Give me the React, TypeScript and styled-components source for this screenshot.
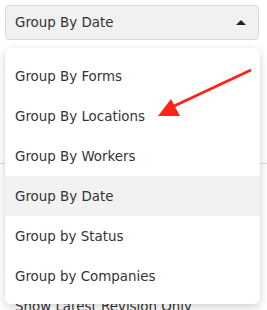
import React from 'react';
import styled, { createGlobalStyle } from 'styled-components';

const GlobalStyle = createGlobalStyle`
  body {
    margin: 0;
    background: #ffffff;
    font-family: 'DejaVu Sans', 'Liberation Sans', sans-serif;
    color: #333333;
  }
`;

const Page = styled.div`
  position: relative;
  width: 267px;
  height: 310px;
  overflow: hidden;
  padding: 5px 8px 0 5px;
  box-sizing: border-box;
`;

const SelectBox = styled.div`
  height: 35px;
  box-sizing: border-box;
  display: flex;
  align-items: center;
  justify-content: space-between;
  padding: 0 12px 0 9px;
  background: #f1f1f1;
  border: 1px solid #dadada;
  border-radius: 4px;
  font-size: 13.4px;
`;

const Caret = styled.span`
  width: 0;
  height: 0;
  border-left: 5px solid transparent;
  border-right: 5px solid transparent;
  border-bottom: 5px solid #222;
`;

const Behind = styled.div`
  display: flex;
  flex-direction: column;
  margin: 0 -8px 0 -5px;
`;

const BehindRow = styled.div<{ h: number; divider?: boolean }>`
  height: ${(p) => p.h}px;
  border-bottom: ${(p) => (p.divider ? '1px solid #dddddd' : 'none')};
  padding-left: 15px;
  display: flex;
  align-items: flex-end;
  font-size: 13.4px;
`;

const Menu = styled.ul`
  position: absolute;
  top: 48px;
  left: 5px;
  width: 255px;
  margin: 0;
  padding: 8px 0;
  list-style: none;
  background: #fff;
  border-radius: 6px;
  box-shadow: 0 3px 10px rgba(0, 0, 0, 0.18);
`;

const Item = styled.li<{ active?: boolean }>`
  height: 40px;
  display: flex;
  align-items: center;
  padding-left: 10px;
  font-size: 13.4px;
  color: #333;
  background: ${(p) => (p.active ? '#f2f2f2' : 'transparent')};
`;

const Pointer = styled.svg`
  position: absolute;
  left: 0;
  top: 0;
  pointer-events: none;
`;

const options = [
  'Group By Forms',
  'Group By Locations',
  'Group By Workers',
  'Group By Date',
  'Group by Status',
  'Group by Companies',
];

const App = () => {
  return (
    <Page>
      <GlobalStyle />
      <SelectBox>
        <span>Group By Date</span>
        <Caret />
      </SelectBox>
      <Behind>
        <BehindRow h={123} divider />
        <BehindRow h={150}>Show Latest Revision Only</BehindRow>
      </Behind>
      <Menu>
        {options.map((o) => (
          <Item key={o} active={o === 'Group By Date'}>
            {o}
          </Item>
        ))}
      </Menu>
      <Pointer width="267" height="310" viewBox="0 0 267 310">
        <line x1="251" y1="70" x2="172" y2="107" stroke="#ff2418" strokeWidth="3" />
        <polygon points="158,116 171,99 180,116" fill="#ff2418" />
      </Pointer>
    </Page>
  );
};

export default App;
